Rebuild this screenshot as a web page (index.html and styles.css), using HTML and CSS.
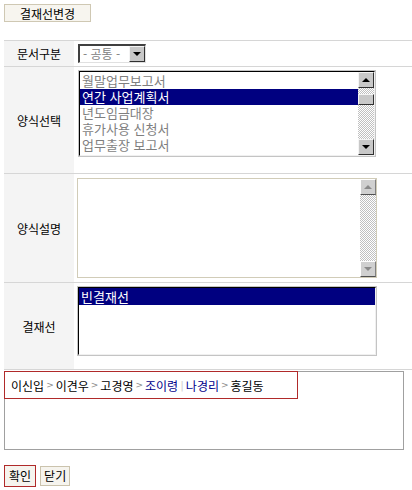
FILE: index.html
```html
<!DOCTYPE html>
<html lang="ko">
<head>
  <meta charset="UTF-8" />
  <title>결재선변경</title>
  <link rel="stylesheet" href="styles.css">
</head>
<body>

  <button class="tab-btn">결재선변경</button>

  <div class="form">
    <div class="row row-type">
      <div class="label">문서구분</div>
      <div class="cell">
        <div class="combo">
          <span class="combo-text">- 공통 -</span>
          <span class="sb-btn down"></span>
        </div>
      </div>
    </div>

    <div class="row row-form">
      <div class="label">양식선택</div>
      <div class="cell">
        <div class="listbox forms">
          <div class="listbox-in">
            <ul class="items">
              <li>월말업무보고서</li>
              <li class="sel">연간 사업계획서</li>
              <li>년도임금대장</li>
              <li>휴가사용 신청서</li>
              <li>업무출장 보고서</li>
            </ul>
            <div class="scroll">
              <span class="sb-btn up"></span>
              <span class="sb-track"><span class="sb-thumb"></span></span>
              <span class="sb-btn down"></span>
            </div>
          </div>
        </div>
      </div>
    </div>

    <div class="row row-desc">
      <div class="label">양식설명</div>
      <div class="cell">
        <div class="memo">
          <div class="memo-text"></div>
          <div class="scroll off">
            <span class="sb-btn up"></span>
            <span class="sb-track"></span>
            <span class="sb-btn down"></span>
          </div>
        </div>
      </div>
    </div>

    <div class="row row-line">
      <div class="label">결재선</div>
      <div class="cell">
        <div class="listbox lines">
          <div class="listbox-in">
            <ul class="items">
              <li class="sel">빈결재선</li>
            </ul>
          </div>
        </div>
      </div>
    </div>
  </div>

  <div class="path-box">
    <div class="path">
      <span>이신입</span><i class="gt">&gt;</i>
      <span>이견우</span><i class="gt">&gt;</i>
      <span>고경영</span><i class="gt">&gt;</i>
      <span class="blue">조이령</span><i class="bar">|</i>
      <span class="blue">나경리</span><i class="gt">&gt;</i>
      <span>홍길동</span>
    </div>
  </div>

  <div class="actions">
    <button class="btn focus">확인</button>
    <button class="btn">닫기</button>
  </div>

</body>
</html>
```

FILE: styles.css
```css
body {
  font-family: "Noto Sans CJK KR", "DejaVu Sans", sans-serif;
  font-size: 12px;
  color: #000;
  background: #fff;
  margin: 4px 0 0 4px;
}
button {
  font-family: inherit;
  cursor: pointer;
}
.tab-btn {
  display: block;
  width: 87px;
  height: 18px;
  padding: 0;
  font-size: 12px;
  line-height: 15px;
  background: #f7f5ef;
  border: 1px solid #cfc8b3;
  margin-bottom: 18px;
}
.form {
  border-top: 1px solid #d6d6d6;
}
.row {
  display: grid;
  grid-template-columns: 70px 1fr;
  border-bottom: 1px solid #d6d6d6;
}
.label {
  background: #f4f4f4;
  display: flex;
  align-items: center;
  justify-content: center;
  font-size: 12px;
}
.cell {
  display: flex;
  align-items: flex-start;
}
.row-type { height: 25px; }
.row-type .cell { align-items: center; padding-left: 4px; }
.row-form { height: 106px; }
.row-form .cell { padding: 3px 0 0 4px; }
.row-desc { height: 108px; }
.row-desc .cell { padding: 4px 0 0 3px; }
.row-line { height: 86px; }
.row-line .cell { padding: 3px 0 0 3px; }

/* combo box */
.combo {
  width: 65px;
  height: 16px;
  display: flex;
  align-items: stretch;
  border-style: solid;
  border-width: 2px 1px 1px 2px;
  border-color: #404040 #e0e0e0 #e0e0e0 #404040;
  background: #fff;
}
.combo-text {
  flex: 1;
  color: #808080;
  font-size: 12px;
  line-height: 16px;
  padding-left: 3px;
  white-space: nowrap;
}
.combo .sb-btn {
  width: 14px;
  height: auto;
}

/* list boxes */
.listbox {
  border: 1px solid #c4c4c4;
  background: #fff;
}
.listbox-in {
  display: flex;
  height: 100%;
  box-sizing: border-box;
  border-style: solid;
  border-width: 1px;
  border-color: #000 #f0f0f0 #f0f0f0 #000;
}
.forms { width: 296px; height: 85px; }
.lines { width: 298px; height: 68px; }
.items {
  flex: 1;
  list-style: none;
  margin: 0;
  padding: 1px 0 0 0;
  font-size: 13px;
  color: #7f7f7f;
}
.items li {
  height: 16px;
  line-height: 16px;
  padding-left: 2px;
  white-space: nowrap;
}
.items li.sel {
  background: #000080;
  color: #fff;
}
.lines .items { padding-top: 0; }
.lines .items li { height: 17px; line-height: 17px; }

/* scrollbars */
.scroll {
  width: 16px;
  display: flex;
  flex-direction: column;
}
.sb-btn {
  display: flex;
  align-items: center;
  justify-content: center;
  height: 14px;
  background: #c8c8c8;
  border-style: solid;
  border-width: 1px;
  border-color: #f4f4f4 #303030 #303030 #f4f4f4;
}
.sb-btn::after {
  content: "";
  border-left: 4px solid transparent;
  border-right: 4px solid transparent;
}
.sb-btn.up::after { border-bottom: 4px solid #000; }
.sb-btn.down::after { border-top: 4px solid #000; }
.sb-track {
  flex: 1;
  background-image: repeating-conic-gradient(#c0c0c0 0 25%, #fff 0 50%);
  background-size: 2px 2px;
}
.sb-thumb {
  display: block;
  height: 9px;
  margin-top: 6px;
  background: #c8c8c8;
  border: 1px solid;
  border-color: #f4f4f4 #303030 #303030 #f4f4f4;
}
.scroll.off .sb-btn { background: #d0d0d0; border-color: #fff #808080 #505050 #fff; }
.scroll.off .sb-btn.up::after { border-bottom-color: #8a8a8a; }
.scroll.off .sb-btn.down::after { border-top-color: #8a8a8a; }

/* description box */
.memo {
  width: 298px;
  height: 98px;
  display: flex;
  border: 1px solid #d1ccb8;
  background: #fff;
}
.memo-text { flex: 1; }

/* approval path */
.path-box {
  width: 398px;
  height: 77px;
  margin-top: 1px;
  border: 1px solid #a0a0a0;
}
.path {
  width: 286px;
  height: 26px;
  margin: -1px 0 0 -1px;
  border: 1px solid #b02a2a;
  display: flex;
  align-items: center;
  padding-left: 6px;
  box-sizing: content-box;
  font-size: 12px;
  white-space: nowrap;
}
.path i {
  font-style: normal;
  font-family: "DejaVu Sans", sans-serif;
  margin: 0 2px;
}
.path .gt { color: #8c8c8c; font-size: 9px; }
.path .bar { color: #d0d0d0; font-size: 11px; }
.path .blue { color: #00008b; }

/* buttons */
.actions {
  display: flex;
  gap: 4px;
  margin-top: 15px;
}
.btn {
  height: 20px;
  padding: 0 3px;
  font-size: 12px;
  line-height: 16px;
  background: #f6f4ee;
  border: 1px solid #cbc3ad;
  margin-top: 1px;
}
.btn.focus {
  height: 22px;
  margin-top: 0;
  border-color: #b02a2a;
  padding: 0 4px;
}
```
